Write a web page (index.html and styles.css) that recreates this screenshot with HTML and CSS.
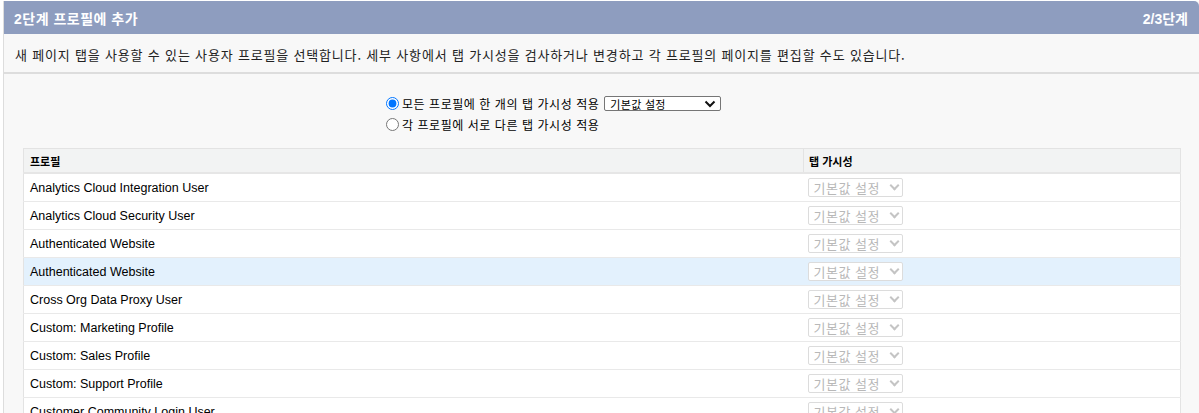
FILE: index.html
```html
<!DOCTYPE html>
<html lang="ko">
<head>
<meta charset="utf-8">
<link rel="stylesheet" href="styles.css">
</head>
<body>
<div class="page">
  <div class="titlebar">
    <h2 class="title">2단계 프로필에 추가</h2>
    <span class="step">2/3단계</span>
  </div>
  <div class="desc">새 페이지 탭을 사용할 수 있는 사용자 프로필을 선택합니다. 세부 사항에서 탭 가시성을 검사하거나 변경하고 각 프로필의 페이지를 편집할 수도 있습니다.</div>
  <div class="content">
    <div class="options">
      <label class="opt"><input type="radio" name="vis" checked><span>모든 프로필에 한 개의 탭 가시성 적용</span>
        <span class="sel"><span>기본값 설정</span><svg width="12" height="8" viewBox="0 0 12 8"><path d="M1.5 1.5 L6 6 L10.5 1.5" fill="none" stroke="#111" stroke-width="2"/></svg></span>
      </label>
      <label class="opt"><input type="radio" name="vis"><span>각 프로필에 서로 다른 탭 가시성 적용</span></label>
    </div>
    <table class="grid">
      <thead>
        <tr><th class="c1">프로필</th><th class="c2">탭 가시성</th></tr>
      </thead>
      <tbody>
        <tr><td>Analytics Cloud Integration User</td><td><span class="dsel">기본값 설정<i></i></span></td></tr>
        <tr><td>Analytics Cloud Security User</td><td><span class="dsel">기본값 설정<i></i></span></td></tr>
        <tr><td>Authenticated Website</td><td><span class="dsel">기본값 설정<i></i></span></td></tr>
        <tr class="hl"><td>Authenticated Website</td><td><span class="dsel">기본값 설정<i></i></span></td></tr>
        <tr><td>Cross Org Data Proxy User</td><td><span class="dsel">기본값 설정<i></i></span></td></tr>
        <tr><td>Custom: Marketing Profile</td><td><span class="dsel">기본값 설정<i></i></span></td></tr>
        <tr><td>Custom: Sales Profile</td><td><span class="dsel">기본값 설정<i></i></span></td></tr>
        <tr><td>Custom: Support Profile</td><td><span class="dsel">기본값 설정<i></i></span></td></tr>
        <tr><td>Customer Community Login User</td><td><span class="dsel">기본값 설정<i></i></span></td></tr>
      </tbody>
    </table>
  </div>
</div>
</body>
</html>
```

FILE: styles.css
```css
html, body {
  margin: 0;
  padding: 0;
  background: #ffffff;
  overflow: hidden;
}
body {
  font-family: "Liberation Sans", Arial, "Noto Sans CJK KR", sans-serif;
  color: #16325c;
}
.page {
  margin: 1px 0 0 3px;
  width: 1196px;
  height: 412px;
  background: #f8f8f8;
  border-left: 1px solid #dddddd;
  box-sizing: border-box;
  overflow: hidden;
}
.titlebar {
  height: 33px;
  background: #8e9dbf;
  border-top-right-radius: 5px;
  display: flex;
  align-items: center;
  justify-content: space-between;
  padding: 0 11px 0 11px;
  margin-left: -1px;
}
.title {
  margin: 0;
  font-size: 14px;
  font-weight: bold;
  letter-spacing: 0.5px;
  color: #ffffff;
  font-family: "Liberation Sans", "Noto Sans CJK KR", sans-serif;
}
.step {
  font-size: 14px;
  font-weight: bold;
  color: #ffffff;
  font-family: "Liberation Sans", "Noto Sans CJK KR", sans-serif;
}
.desc {
  height: 40px;
  box-sizing: border-box;
  border-bottom: 2px solid #dddddd;
  padding: 12px 11px 0;
  font-size: 13px;
  letter-spacing: 0.82px;
  line-height: 18px;
  color: #222222;
  font-family: "Noto Sans CJK KR", sans-serif;
}
.content {
  padding: 20px 19px 0 19px;
}
.options {
  margin-left: 363px;
  display: flex;
  flex-direction: column;
  gap: 2px;
}
.opt {
  display: flex;
  align-items: center;
  height: 19px;
  font-size: 12px;
  letter-spacing: 0.55px;
  color: #000000;
  font-family: "Noto Sans CJK KR", sans-serif;
}
.opt input {
  margin: 0 3px 0 0;
  width: 13px;
  height: 13px;
}
.sel {
  display: inline-flex;
  align-items: center;
  justify-content: space-between;
  width: 117px;
  height: 15px;
  box-sizing: border-box;
  margin-left: 5px;
  border: 1px solid #767676;
  border-radius: 2px;
  background: #ffffff;
  padding: 0 4px 0 5px;
  font-size: 11px;
  letter-spacing: 0.3px;
  color: #000000;
}
.grid {
  margin-top: 14px;
  width: 1158px;
  border-collapse: collapse;
  border: 1px solid #e3e3e3;
  background: #ffffff;
  font-size: 12.5px;
}
.grid th {
  background: #f2f3f3;
  height: 23px;
  text-align: left;
  font-weight: bold;
  font-size: 11px;
  color: #000000;
  padding: 0 5px;
  border-bottom: 2px solid #e6e6e6;
  font-family: "Noto Sans CJK KR", sans-serif;
}
.grid th.c1 {
  width: 768px;
  padding-left: 6px;
  border-right: 1px solid #e3e3e3;
}
.grid td {
  height: 27px;
  padding: 0 5px 0 6px;
  border-bottom: 1px solid #e9e9e9;
  color: #000000;
}
.grid td + td {
  padding-left: 4px;
}
.grid tr.hl td {
  background: #e3f1fd;
}
.dsel {
  display: inline-flex;
  align-items: center;
  justify-content: space-between;
  width: 95px;
  height: 19px;
  box-sizing: border-box;
  border: 1px solid #dcdcdc;
  border-radius: 2px;
  background: #ffffff;
  padding: 0 4px 0 5px;
  font-size: 13px;
  letter-spacing: 0.5px;
  color: #b8b8b8;
  font-family: "Noto Sans CJK KR", sans-serif;
  vertical-align: middle;
}
.dsel i {
  width: 5px;
  height: 5px;
  border-right: 2px solid #c4c4c4;
  border-bottom: 2px solid #c4c4c4;
  transform: rotate(45deg);
  margin-top: -4px;
}
```
